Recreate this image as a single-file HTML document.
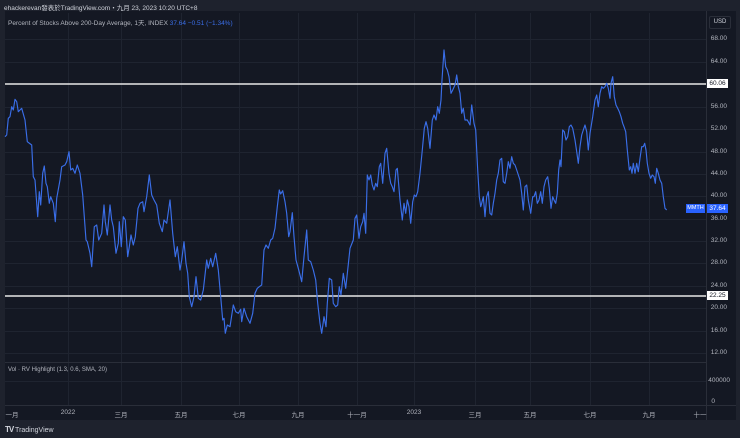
<!DOCTYPE html>
<html><head><meta charset="utf-8"><style>
body{margin:0;width:740px;height:438px;background:#1e222d;overflow:hidden;font-family:"Liberation Sans","Noto Sans CJK SC",sans-serif;color:#b2b5be;position:relative}
.t{position:absolute;font-size:6.5px;white-space:nowrap}
.p{position:absolute;right:13px;font-size:6.5px;color:#b2b5be}
.x{position:absolute;top:409px;font-size:6.5px;color:#b2b5be;transform:translateX(-50%)}
</style></head><body>
<div style="position:absolute;left:5px;top:11px;width:731px;height:409px;background:#141823"></div>
<div class="t" style="left:4px;top:2px;color:#d1d4dc">ehackerevan發表於TradingView.com・九月 23, 2023 10:20 UTC+8</div>
<svg style="position:absolute;left:0;top:0" width="740" height="438">
<g stroke="#1f2430" stroke-width="1">
<path d="M5 39.5H706M5 62.5H706M5 107.5H706M5 129.5H706M5 152.5H706M5 174.5H706M5 196.5H706M5 219.5H706M5 241.5H706M5 263.5H706M5 286.5H706M5 308.5H706M5 331.5H706M5 353.5H706M5 381.5H706"/>
<path d="M68.5 13V405M121.5 13V405M181.5 13V405M239.5 13V405M298.5 13V405M357.5 13V405M414.5 13V405M475.5 13V405M530.5 13V405M590.5 13V405M649.5 13V405"/>
</g>
<path d="M5 362.5H706M5 405.5H736M706.5 11V420" stroke="#2a2e39" stroke-width="1"/>
<path d="M5 84H706M5 296H706" stroke="#e8e8e8" stroke-width="1.6"/>
<polyline fill="none" stroke="#3a6ee8" stroke-width="1.15" stroke-linejoin="round" points="5,136.7 6.7,135 8.3,118.3 10,116.7 11.7,106.7 13.3,110 15,99.3 16.7,101.7 18.3,111.7 20,110 21.7,108.3 25,120 27.3,141.7 31.7,145 33.3,176.7 35,180 37.7,216.7 39.3,191.7 40.7,205 42.7,173.3 44.3,166 46,183.3 47.3,186.7 49.3,203.3 50.7,196.7 53.3,203.3 55.3,221.7 56.7,198.3 60,180 61.7,166.7 65,165 66.7,161.7 69,151.7 70.7,170 72.7,168.3 75,173.3 77.3,165 80,173.3 82.7,195 86,240 87.3,241.7 90,253.3 91.7,266.7 94.3,226.7 96.7,225 98.7,240 101.7,233.3 104,205 105.3,221.7 107.3,235 110,205 111.7,220 113.3,226.7 116,253.3 118.3,243.3 119.3,221.7 121.3,246.7 123.3,216.7 125.3,220 127.7,256.7 129.3,246.7 131,235 133.3,245 135.3,236.7 138,208.3 140,203.3 142.7,201.7 144,211.7 146.7,196.7 149.3,175 151.7,195 154,200 156.7,205 159.3,223.3 162.3,231.7 164,220 166.7,223.3 170,200 172.7,233.3 175.3,256.7 177.3,246.7 180,270 181.7,260 184,241.7 186,263.3 187.7,273.3 189.3,296.7 191.7,306.7 194,296.7 196,276.7 198.3,298.3 200.7,300 203.3,290 206.7,260 208.3,268.3 210.7,258.3 212.7,266.7 215.7,253.3 218.3,270 220.7,296.7 222.7,320 224,318.3 225.3,333.3 227.3,325 230,326.7 233.3,305 235.7,311.7 238.3,313.3 240.7,309.3 241.7,321.7 244,308.3 246.7,316.7 250,323.3 252.7,313.3 255,293.3 257.3,288.3 259.3,286.7 261.7,285 264,250 266,245 268.3,248.3 270.7,240 272.7,238.3 275,228.3 277.3,206.7 279.3,190 280.7,194 282.7,190.7 285,201.7 286.7,213.3 288.7,236.7 290,231.7 292.3,212.7 294,236.7 296,260 298.3,268.3 301.7,281.7 304,256.7 306.7,230 308.3,260 310.7,261.7 313.3,270 315.7,280 317.7,303.3 320,323.3 321.7,333.3 324,316.7 326,326.7 327.3,303.3 329.3,278.3 331.7,280 333.3,303.3 335.7,306.7 337.7,305 339.3,286.7 341,295 343.3,273.3 345.7,288.3 347.7,270 350,248.3 353.3,240 355,218.3 356.7,215 359,238.3 360.7,226.7 362.7,221.7 364,213.3 365.7,233.3 367.3,175 369,180 370.7,175 372.3,185 374,190 375.7,183.3 377.3,186.7 379.3,166.7 380.7,163.3 382.7,183.3 385,153.3 386.7,148.3 389,173.3 390.7,183.3 392.3,186.7 394,191.7 396,170 397.3,168.3 400,200 402.3,220 404,203.3 405.7,213.3 407.3,200 409,206.7 410.7,223.3 412.7,201.7 414.3,195 416,196.7 417.7,191.7 420,173.3 422.3,150 424.3,128.3 426,121.7 427.7,128.3 430,148.3 432.3,120 434,115 436,120 437.7,106.7 439.3,113.3 441,100 442,80 444,50 445.7,66.7 447.3,70 449,76.7 451,93.3 452.7,90 455,85 456.7,75 458.3,86.7 460,93.3 461.7,113.3 463.3,108.3 465,120 467.3,120 470,125 471.7,105 474,123.3 475.7,130 477.7,170 479.3,196.7 480.7,206.7 481.7,203.3 483.3,196.7 485,216.7 486.7,196.7 488.3,191.7 490,213.3 491.7,215 493.3,203.3 495,193.3 496.7,180 498.3,173.3 500,160 501.7,158.3 503.3,181.7 505,183.3 506.7,173.3 508.3,161.7 510,168.3 511.7,156.7 513.3,163.3 515,165 516.7,170 520,180 521.7,193.3 523.3,210 525,186.7 526.7,185 528.3,200 530.7,213.3 532.7,196.7 534,196.7 535.7,191.7 537.3,203.3 539,200 540.7,191.7 542.3,203.3 544,186.7 545.7,180 547.7,176.7 549.3,188.3 551,208.3 552.7,196.7 554,200 555.7,203.3 557.3,193.3 558.7,170 560,160 561,166.7 562.7,130 564.3,131.7 566,140 567.7,136.7 569.3,126.7 571,125 572.7,128.3 575,140 576.7,151.7 578.3,163.3 580,146.7 581.7,135 583.3,130 585,125 586.7,131.7 588.3,150 590,133.3 592.7,116.7 595,100 596.7,95 598.3,106.7 600,93.3 601.7,86.7 603.3,88.3 605,86.7 606.7,83.3 608.3,88.3 610,98.3 611,83.3 612.7,76.7 614.3,96.7 616,105 617.7,108.3 619.3,111.7 621,116.7 622.7,123.3 624,126.7 625.7,131.7 627.3,150 629.3,170 630.7,166.7 632,173.3 633.3,163.3 635,173.3 636.7,163.3 638.3,171.7 640,158.3 641.7,146.7 643.3,146.7 644.7,143.3 646,150 647.3,163.3 649,173.3 650.7,178.3 652.3,175 654,176.7 655.3,183.3 656.7,168.3 658.3,173.3 660,180 661.7,183.3 663.3,196.7 665,208.3 666.7,210"/>
</svg>
<div class="t" style="left:8px;top:17px">Percent of Stocks Above 200-Day Average, 1天, INDEX <span style="color:#3a6ee8">37.64 −0.51 (−1.34%)</span></div>
<div style="position:absolute;left:709px;top:16px;width:20px;height:11px;border:1px solid #2a2e39;border-radius:2px;font-size:6px;line-height:11px;text-align:center;color:#d1d4dc">USD</div>
<div class="p" style="top:35px">68.00</div>
<div class="p" style="top:58px">64.00</div>
<div style="position:absolute;left:707px;top:79px;width:21px;height:9px;background:#fff;color:#131722;font-size:6.5px;line-height:9px;text-align:center">60.06</div>
<div class="p" style="top:103px">56.00</div>
<div class="p" style="top:125px">52.00</div>
<div class="p" style="top:148px">48.00</div>
<div class="p" style="top:170px">44.00</div>
<div class="p" style="top:192px">40.00</div>
<div style="position:absolute;left:686px;top:204px;width:19px;height:9px;background:#2962ff;color:#fff;font-size:5.5px;line-height:9px;text-align:center">MMTH</div>
<div style="position:absolute;left:707px;top:204px;width:21px;height:9px;background:#2962ff;color:#fff;font-size:6.5px;line-height:9px;text-align:center">37.64</div>
<div class="p" style="top:215px">36.00</div>
<div class="p" style="top:237px">32.00</div>
<div class="p" style="top:259px">28.00</div>
<div class="p" style="top:282px">24.00</div>
<div style="position:absolute;left:707px;top:291px;width:21px;height:9px;background:#fff;color:#131722;font-size:6.5px;line-height:9px;text-align:center">22.25</div>
<div class="p" style="top:304px">20.00</div>
<div class="p" style="top:327px">16.00</div>
<div class="p" style="top:349px">12.00</div>
<div class="p" style="top:377px;right:10px">400000</div>
<div class="p" style="top:398px;right:25px">0</div>
<div class="t" style="left:8px;top:367px;font-size:6px">Vol · RV Highlight (1.3, 0.6, SMA, 20)</div>
<div class="x" style="left:12px">一月</div>
<div class="x" style="left:68px">2022</div>
<div class="x" style="left:121px">三月</div>
<div class="x" style="left:181px">五月</div>
<div class="x" style="left:239px">七月</div>
<div class="x" style="left:298px">九月</div>
<div class="x" style="left:357px">十一月</div>
<div class="x" style="left:414px">2023</div>
<div class="x" style="left:475px">三月</div>
<div class="x" style="left:530px">五月</div>
<div class="x" style="left:590px">七月</div>
<div class="x" style="left:649px">九月</div>
<div class="x" style="left:700px">十一</div>
<div class="t" style="left:5px;top:425px;color:#d1d4dc;font-size:7px"><b style="font-size:8px;letter-spacing:-1px">TV</b> TradingView</div>
</body></html>
